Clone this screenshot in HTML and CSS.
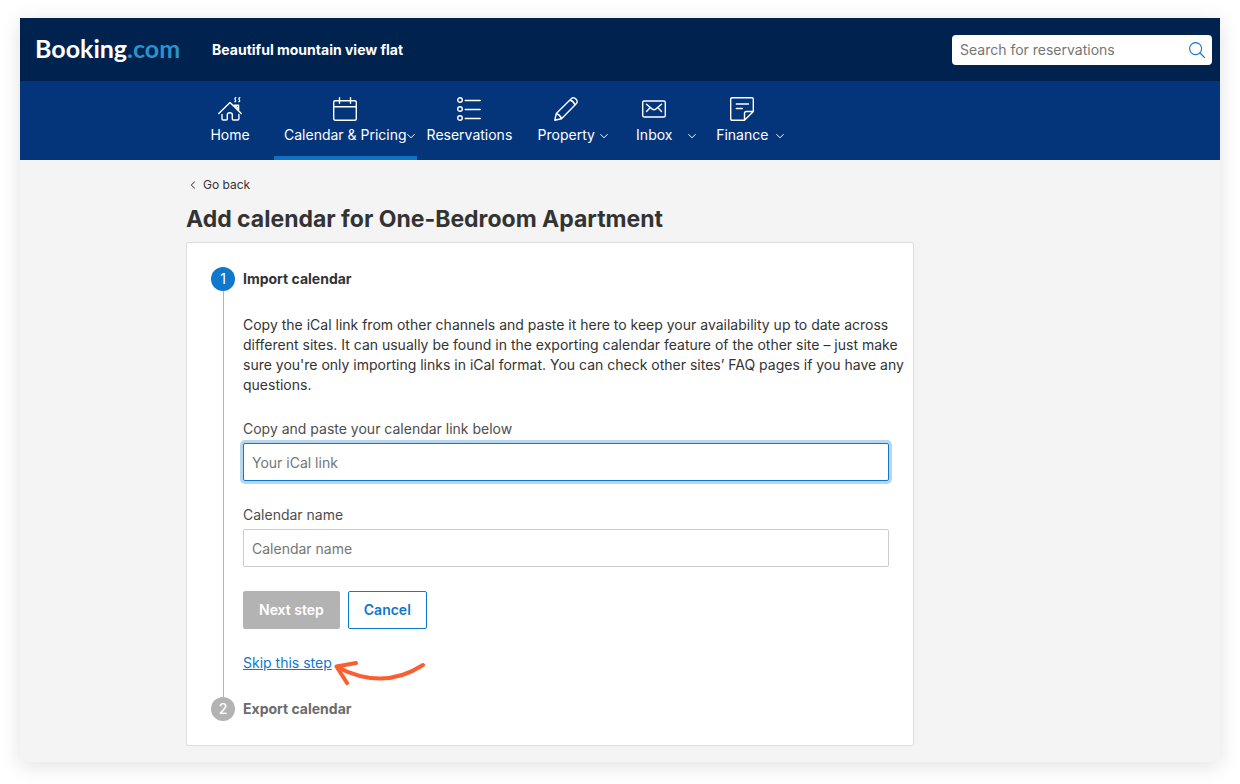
FILE: index.html
```html
<!DOCTYPE html>
<html lang="en">
<head>
<meta charset="utf-8">
<meta name="viewport" content="width=device-width, initial-scale=1">
<title>Add calendar</title>
<link rel="stylesheet" href="styles.css">
</head>
<body>
<div class="app">
  <header class="topbar">
    <a class="logo" href="#">Booking<span class="logo-tld">.com</span></a>
    <span class="property-name">Beautiful mountain view flat</span>
    <form class="search" role="search">
      <input class="search-input" type="search" placeholder="Search for reservations" aria-label="Search for reservations">
      <button class="search-button" type="button" aria-label="Search">
        <svg width="16" height="16" viewBox="0 0 16 16" fill="none" stroke="currentColor" stroke-width="1.1" stroke-linecap="round"><circle cx="6.6" cy="6.6" r="6"/><path d="M11 11l4.5 4.5"/></svg>
      </button>
    </form>
  </header>

  <nav class="nav" aria-label="Main">
    <a class="nav-item" href="#">
      <svg class="nav-icon" viewBox="0 0 24 24"><path d="M.8 16.6L12 5.4l11.2 11.2M4 17.5v4.3q0 1.2 1.2 1.2h3.1q1 0 1-1v-4.2q0-2 2.5-2t2.5 2V22q0 1 1 1h4.3q1.3 0 1.3-1.2v-4.3M16 8.2h4.6v5.400M17.200 8.400l3.400 3.400"/><path stroke-width="1.2" d="M16.800 4.800q1.500-.6.5-2t.5-2.200M20.800 4.800q1.500-.6.5-2t.5-2.200"/></svg>
      <span class="nav-label">Home</span>
    </a>
    <a class="nav-item nav-item-active" href="#" aria-current="page">
      <svg class="nav-icon" viewBox="0 0 24 24"><rect x=".7" y="3.700" width="22.600" height="19.600" rx="1.500"/><path d="M.7 9.700h22.600M6.500.7v5.500M17.500.7v5.500"/></svg>
      <span class="nav-label">Calendar &amp; Pricing</span>
      <svg class="nav-chevron" viewBox="0 0 8 8"><path d="M.7 2.500L4 5.800l3.300-3.300"/></svg>
    </a>
    <a class="nav-item" href="#">
      <svg class="nav-icon" viewBox="0 0 24 24"><circle cx="3" cy="3" r="2.300"/><circle cx="3" cy="12" r="2.300"/><circle cx="3" cy="21" r="2.300"/><path d="M8.200 3.500h15.100M8.200 12.500h15.100M8.200 21.500h15.100"/></svg>
      <span class="nav-label">Reservations</span>
    </a>
    <a class="nav-item" href="#">
      <svg class="nav-icon" viewBox="0 0 24 24"><path d="M.8 23.200l1.500-6.700L17.200 1.700q1.600-1.500 3.500-.6 2.200 1.200 2.500 3.200.1 1.400-1 2.500L7.500 21.700zM2.300 16.500q3.800 1.300 5.200 5.200M16 3q3.700 1.300 5 5"/></svg>
      <span class="nav-label">Property</span>
      <svg class="nav-chevron" viewBox="0 0 8 8"><path d="M.7 2.500L4 5.800l3.300-3.300"/></svg>
    </a>
    <a class="nav-item" href="#">
      <svg class="nav-icon" viewBox="0 0 24 24"><rect x=".7" y="4" width="22.600" height="16" rx="1.500"/><path d="M4.500 7.200l5.800 4.900q1.700 1.300 3.400 0l5.800-4.900M4.500 14.500L8 10.700M19.500 14.500L16 10.700"/></svg>
      <span class="nav-label">Inbox</span>
      <svg class="nav-chevron" viewBox="0 0 8 8"><path d="M.7 2.500L4 5.800l3.300-3.300"/></svg>
    </a>
    <a class="nav-item" href="#">
      <svg class="nav-icon" viewBox="0 0 24 24"><path d="M14.300 23.300H2.200q-1.500 0-1.500-1.500V2.200Q.7.7 2.200.7h19.600q1.500 0 1.500 1.500v12.300l-8.800 8.800v-7q0-1.800 1.800-1.800h7M6.300 7h12.200M6.300 11.500h6"/></svg>
      <span class="nav-label">Finance</span>
      <svg class="nav-chevron" viewBox="0 0 8 8"><path d="M.7 2.500L4 5.800l3.300-3.300"/></svg>
    </a>
  </nav>

  <main class="content">
    <a class="back" href="#">
      <svg class="back-icon" viewBox="0 0 8 8"><path d="M5.500 1L2.200 4l3.300 3"/></svg>Go back
    </a>
    <h1 class="title">Add calendar for One-Bedroom Apartment</h1>

    <ol class="card">
      <li class="step">
        <div class="step-marker"><span class="step-number">1</span><span class="step-line"></span></div>
        <div class="step-body">
          <h2 class="step-title">Import calendar</h2>
          <form class="form">
            <p class="intro">Copy the iCal link from other channels and paste it here to keep your availability up to date across different sites. It can usually be found in the exporting calendar feature of the other site – just make sure you're only importing links in iCal format. You can check other sites’ FAQ pages if you have any questions.</p>
            <div class="field">
              <label class="label" for="ical-link">Copy and paste your calendar link below</label>
              <input class="input input-focused" id="ical-link" type="text" placeholder="Your iCal link">
            </div>
            <div class="field">
              <label class="label" for="calendar-name">Calendar name</label>
              <input class="input" id="calendar-name" type="text" placeholder="Calendar name">
            </div>
            <div class="actions">
              <button class="button button-disabled" type="button" disabled>Next step</button>
              <button class="button button-outline" type="button">Cancel</button>
            </div>
            <div class="skip">
              <a class="skip-link" href="#">Skip this step</a>
              <svg class="arrow" viewBox="0 0 92 26"><path d="M89 6Q49 32 3 8M22 4L2.500 7.500 13 24"/></svg>
            </div>
          </form>
        </div>
      </li>
      <li class="step step-upcoming">
        <div class="step-marker"><span class="step-number">2</span></div>
        <div class="step-body"><h2 class="step-title">Export calendar</h2></div>
      </li>
    </ol>
  </main>
</div>
</body>
</html>
```
FILE: styles.css
```css
* { box-sizing: border-box; }

body {
  margin: 0;
  padding: 18px 20px 22px;
  background: #fff;
  color: #333;
  font: 14px/20px Inter, "Liberation Sans", sans-serif;
}

a { color: inherit; text-decoration: none; }

.app {
  background: #f4f4f4;
  box-shadow: 0 4px 20px rgba(0, 0, 0, 0.12);
}

.topbar {
  display: flex;
  align-items: center;
  height: 63px;
  padding: 0 8px 0 15px;
  background: #00224f;
  color: #fff;
}

.logo {
  margin-right: 32px;
  padding-bottom: 4px;
  font: 700 25px/32px Lato, sans-serif;
}

.logo-tld { color: #2a93c9; }

.property-name { font-weight: 700; }

.search {
  display: flex;
  align-items: center;
  width: 260px;
  height: 30px;
  margin-left: auto;
  padding: 0 7px 0 8px;
  border-radius: 4px;
  background: #fff;
}

.search-input {
  flex: 1;
  min-width: 0;
  padding: 0;
  border: 0;
  outline: 0;
  background: none;
  font: inherit;
}

::placeholder { color: #757575; opacity: 1; }

.search-button {
  display: flex;
  padding: 0;
  border: 0;
  background: none;
  color: #0f77cc;
}

.nav {
  display: flex;
  height: 79px;
  padding: 0 166px;
  background: #04357b;
  color: #fff;
}

.nav-item {
  position: relative;
  display: flex;
  flex-direction: column;
  align-items: center;
  gap: 4px;
  min-width: 88px;
  padding: 16px 10px 0;
  white-space: nowrap;
}

.nav-item-active { border-bottom: 4px solid #0f71c0; }

.nav-icon {
  width: 24px;
  height: 24px;
  fill: none;
  stroke: currentColor;
  stroke-width: 1.4;
  stroke-linecap: round;
  stroke-linejoin: round;
}

.nav-chevron {
  position: absolute;
  top: 51px;
  right: 2px;
  width: 8px;
  height: 8px;
  fill: none;
  stroke: currentColor;
  stroke-linecap: round;
  stroke-linejoin: round;
}

.content { padding: 15px 166px 16px; }

.back {
  display: flex;
  align-items: center;
  gap: 6px;
  width: fit-content;
  padding-left: 3px;
  font-size: 12px;
}

.back-icon {
  width: 8px;
  height: 8px;
  fill: none;
  stroke: currentColor;
  stroke-linecap: round;
}

.title {
  margin: 8px 0 7px;
  font-size: 23px;
  font-weight: 700;
  line-height: 32px;
}

.card {
  max-width: 728px;
  margin: 0;
  padding: 24px;
  border: 1px solid #dedede;
  border-radius: 2px;
  background: #fff;
  list-style: none;
}

.step { display: flex; gap: 8px; }

.step-marker {
  display: flex;
  flex-direction: column;
  align-items: center;
  width: 24px;
}

.step-number {
  width: 24px;
  height: 24px;
  border-radius: 50%;
  background: #0f77cc;
  color: #fff;
  line-height: 24px;
  text-align: center;
}

.step-line {
  flex: 1;
  width: 1px;
  background: #b3b3b3;
}

.step-body { flex: 1; min-width: 0; }

.step-title {
  margin: 0;
  font-size: 14px;
  font-weight: 700;
  line-height: 24px;
}

.step-upcoming .step-number { background: #b3b3b3; font-weight: 500; }
.step-upcoming .step-title { color: #6b6b6b; }

.form {
  display: flex;
  flex-direction: column;
  gap: 24px;
  padding: 24px 0;
}

.intro { margin: 0 -16px 0 0; }

.field { display: flex; flex-direction: column; gap: 4px; }

.label { color: #4d4d4d; }

.input {
  width: 100%;
  height: 38px;
  padding: 0 8px;
  border: 1px solid #ccc;
  border-radius: 2px;
  outline: 0;
  background: #fff;
  font: inherit;
}

.input-focused {
  border-color: #0f77cc;
  box-shadow: 0 0 0 3px #b7d6f0;
}

.actions { display: flex; gap: 8px; }

.button {
  height: 38px;
  padding: 0 15px;
  border: 1px solid;
  border-radius: 2px;
  font: inherit;
  font-weight: 600;
}

.button-disabled { border-color: #b3b3b3; background: #b3b3b3; color: #fff; }
.button-outline { border-color: #0f77cc; background: #fff; color: #0f77cc; }

.skip { position: relative; align-self: flex-start; }

.skip-link {
  color: #0f77cc;
  text-decoration: underline;
}

.arrow {
  position: absolute;
  top: 6px;
  left: 91px;
  width: 92px;
  height: 26px;
  fill: none;
  stroke: #fb5e30;
  stroke-width: 4;
  stroke-linecap: round;
  stroke-linejoin: round;
}
```
